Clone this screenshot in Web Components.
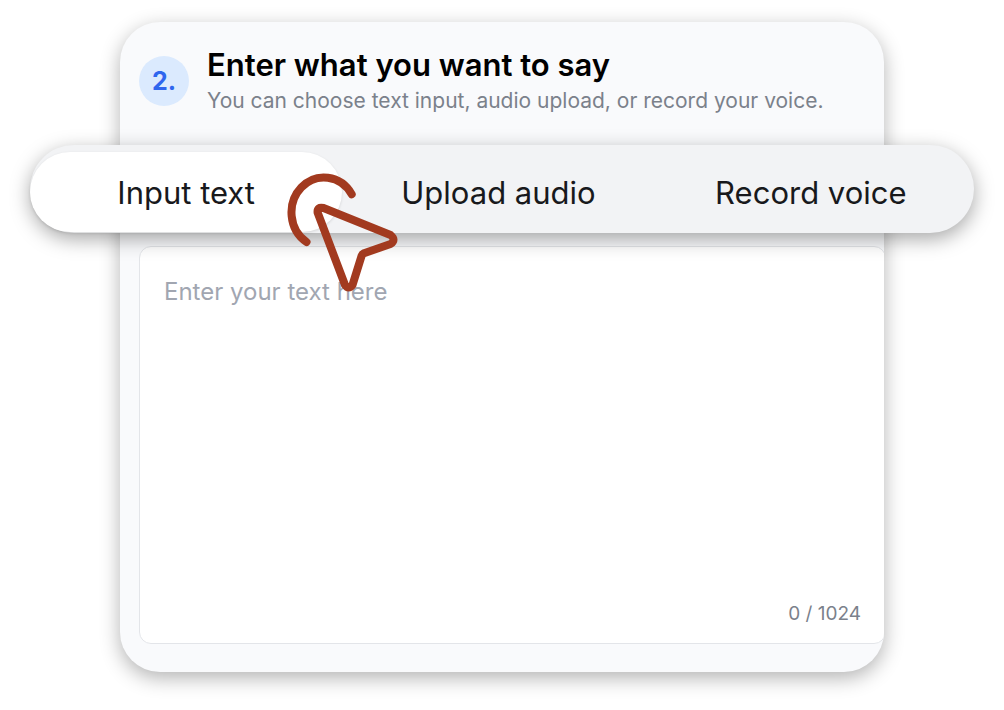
<!DOCTYPE html>
<html lang="en">
<head>
    <meta charset="UTF-8">
    <meta name="viewport" content="width=device-width, initial-scale=1.0">
    <title>Enter what you want to say</title>
    <style>
        body {
            margin: 0;
            padding: 22px 30px 38px;
            background: #fff;
            font-family: Inter, "Liberation Sans", sans-serif;
        }
    </style>
</head>
<body>
    <step-card number="2." heading="Enter what you want to say" hint="You can choose text input, audio upload, or record your voice.">
        <input-tabs slot="tabs"></input-tabs>
        <script-editor placeholder="Enter your text here" max="1024"></script-editor>
    </step-card>

    <script>
        class StepCard extends HTMLElement {
            constructor() {
                super();
                this.attachShadow({ mode: 'open' });
            }

            connectedCallback() {
                this.shadowRoot.innerHTML = `
                    <style>
                        :host {
                            display: block;
                            padding: 0 90px;
                        }

                        .card {
                            border-radius: 40px;
                            background: #f9fafc;
                            box-shadow: 0 6px 20px rgba(0, 0, 0, 0.3);
                        }

                        header {
                            display: flex;
                            align-items: center;
                            gap: 18px;
                            padding: 22px 19px 27px;
                        }

                        .number {
                            display: grid;
                            place-items: center;
                            flex: none;
                            width: 50px;
                            height: 50px;
                            border-radius: 50%;
                            background: #dbeafe;
                            color: #2f66ee;
                            font-size: 25px;
                            font-weight: 700;
                        }

                        h2, p {
                            margin: 0;
                            white-space: nowrap;
                        }

                        h2 {
                            padding-top: 2px;
                            color: #000;
                            font-size: 31px;
                            font-weight: 600;
                            line-height: 38px;
                        }

                        p {
                            color: #7b818b;
                            font-size: 21px;
                            line-height: 34px;
                        }

                        .tabs {
                            position: relative;
                            z-index: 1;
                            margin: 0 -90px;
                        }

                        .body {
                            overflow: hidden;
                            padding: 13px 0 28px 19px;
                            border-radius: 0 0 40px 40px;
                        }
                    </style>

                    <section class="card">
                        <header>
                            <span class="number">${this.getAttribute('number')}</span>
                            <div>
                                <h2>${this.getAttribute('heading')}</h2>
                                <p>${this.getAttribute('hint')}</p>
                            </div>
                        </header>
                        <div class="tabs"><slot name="tabs"></slot></div>
                        <div class="body"><slot></slot></div>
                    </section>
                `;
            }
        }

        class InputTabs extends HTMLElement {
            constructor() {
                super();
                this.attachShadow({ mode: 'open' });
                this.shadowRoot.innerHTML = `
                    <style>
                        :host {
                            display: block;
                        }

                        .bar {
                            display: grid;
                            grid-template-columns: repeat(3, 1fr);
                            padding: 7px 7px 1px 0;
                            border-radius: 44px;
                            background: #f2f3f5;
                            box-shadow: 0 6px 20px rgba(0, 0, 0, 0.35);
                        }

                        .cell {
                            position: relative;
                            display: grid;
                        }

                        button {
                            height: 80px;
                            padding: 0;
                            border: 0;
                            border-radius: 40px;
                            background: none;
                            color: #18191c;
                            font: inherit;
                            font-size: 31px;
                        }

                        button[aria-selected="true"] {
                            background: #fff;
                            box-shadow: 0 1px 3px rgba(0, 0, 0, 0.12);
                        }

                        click-pointer {
                            position: absolute;
                            top: 20px;
                            right: -58px;
                        }
                    </style>

                    <div class="bar" role="tablist">
                        <div class="cell">
                            <button role="tab" aria-selected="true">Input text</button>
                            <click-pointer></click-pointer>
                        </div>
                        <button role="tab" aria-selected="false">Upload audio</button>
                        <button role="tab" aria-selected="false">Record voice</button>
                    </div>
                `;
            }
        }

        class ClickPointer extends HTMLElement {
            constructor() {
                super();
                this.attachShadow({ mode: 'open' });
                this.shadowRoot.innerHTML = `
                    <style>
                        :host {
                            display: block;
                            pointer-events: none;
                        }

                        svg {
                            display: block;
                            fill: none;
                            stroke: #a23a1f;
                            stroke-width: 8;
                            stroke-linecap: round;
                            stroke-linejoin: round;
                        }
                    </style>

                    <svg width="114" height="122" viewBox="0 0 114 122" aria-hidden="true">
                        <path d="M65.7 22.2A32.5 35 0 1 0 20.5 70"/>
                        <path d="M31.6 40.5L59 113Q62.5 118 66.5 113L75.7 83.5Q76.2 82 78 81.2L104.5 72Q110.5 68 104.5 63L37.5 36Q31 34.5 31.6 40.5Z"/>
                    </svg>
                `;
            }
        }

        class ScriptEditor extends HTMLElement {
            constructor() {
                super();
                this.attachShadow({ mode: 'open' });
            }

            connectedCallback() {
                const max = this.getAttribute('max');
                const placeholder = this.getAttribute('placeholder');

                this.shadowRoot.innerHTML = `
                    <style>
                        :host {
                            display: block;
                            margin-right: -2px;
                        }

                        .box {
                            display: flex;
                            flex-direction: column;
                            border: 1px solid #e3e5e9;
                            border-radius: 12px;
                            background: #fff;
                        }

                        textarea {
                            height: 347px;
                            box-sizing: border-box;
                            padding: 28px 24px 0;
                            border: 0;
                            outline: 0;
                            background: none;
                            color: #18191c;
                            font: inherit;
                            font-size: 24px;
                            line-height: 34px;
                            resize: none;
                        }

                        textarea::placeholder {
                            color: #a1a6b1;
                            opacity: 1;
                        }

                        output {
                            padding: 6px 24px 15px;
                            color: #7b818b;
                            font-size: 19px;
                            line-height: 28px;
                            text-align: right;
                        }
                    </style>

                    <div class="box">
                        <textarea id="text" maxlength="${max}" placeholder="${placeholder}" aria-label="${placeholder}"></textarea>
                        <output for="text">0 / ${max}</output>
                    </div>
                `;

                const text = this.shadowRoot.querySelector('textarea');
                const count = this.shadowRoot.querySelector('output');
                text.addEventListener('input', () => {
                    count.textContent = `${text.value.length} / ${max}`;
                });
            }
        }

        customElements.define('click-pointer', ClickPointer);
        customElements.define('input-tabs', InputTabs);
        customElements.define('script-editor', ScriptEditor);
        customElements.define('step-card', StepCard);
    </script>
</body>
</html>
